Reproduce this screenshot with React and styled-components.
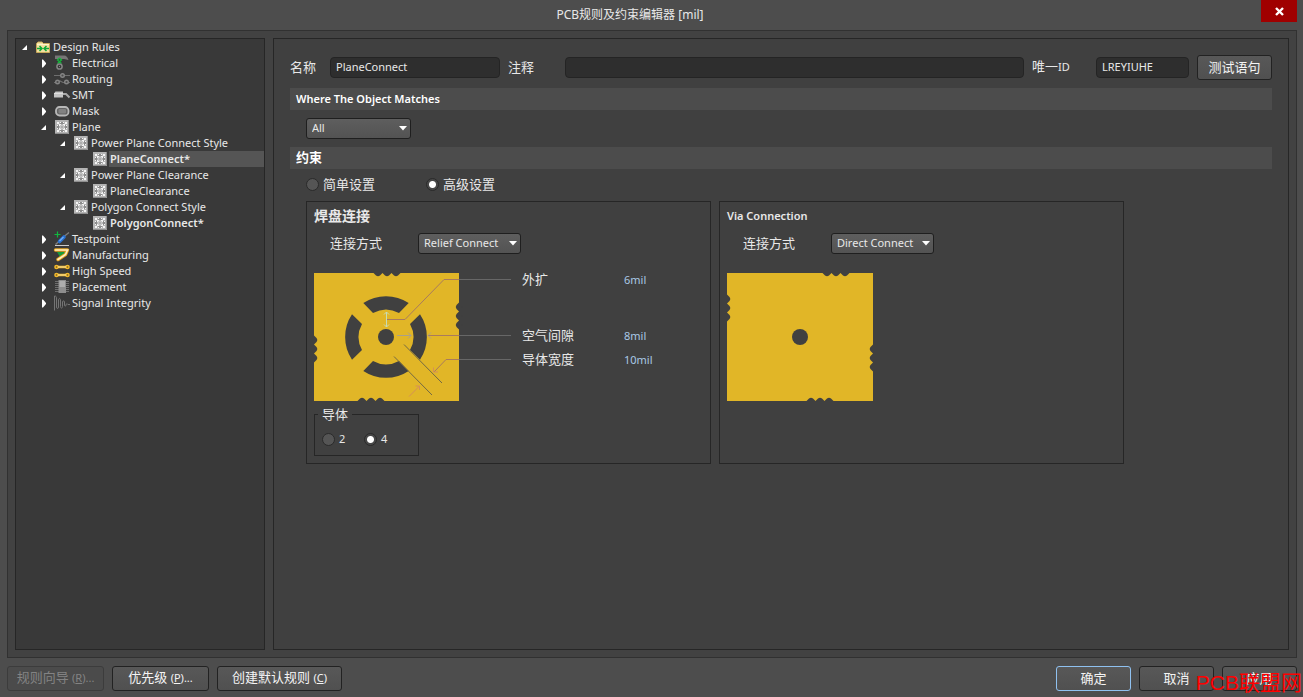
import React, { useState } from 'react';
import styled, { createGlobalStyle } from 'styled-components';

const colors = {
  window: '#4d4d4d',
  frame: '#424242',
  panel: '#404040',
  tree: '#393939',
  selected: '#555555',
  line: '#262626',
  text: '#e8e8e8',
  value: '#a9c8e6',
  gold: '#e1b627',
};

const GlobalStyle = createGlobalStyle`
  * {
    box-sizing: border-box;
  }

  body {
    margin: 0;
    background: ${colors.window};
    color: ${colors.text};
    font-family: 'Noto Sans', 'Noto Sans CJK SC', sans-serif;
    font-size: 11px;
    line-height: 16px;
  }

  button, input, select {
    font: inherit;
    color: inherit;
  }
`;

// -------------------- WINDOW --------------------

const Window = styled.div`
  display: flex;
  flex-direction: column;
  min-height: 100vh;
  padding: 0 6px 6px 7px;
  position: relative;
`;

const TitleBar = styled.header`
  display: flex;
  align-items: flex-start;
  height: 30px;
`;

const WindowTitle = styled.h1`
  flex: 1;
  margin: 0;
  padding: 7px 8px 0 0;
  font-size: 12px;
  font-weight: 400;
  text-align: center;
`;

const CloseButton = styled.button`
  display: flex;
  align-items: center;
  justify-content: center;
  width: 36px;
  height: 22px;
  padding: 0;
  border: none;
  background: #a00000;
`;

const Frame = styled.main`
  flex: 1;
  display: flex;
  gap: 8px;
  padding: 7px;
  border: 1px solid #313131;
  background: ${colors.frame};
`;

const Footer = styled.footer`
  display: flex;
  gap: 8px;
  padding-top: 8px;
`;

const Spacer = styled.div`
  flex: 1;
`;

const Button = styled.button`
  min-width: ${(p) => (p.$wide ? 97 : 75)}px;
  height: 25px;
  padding: 0 ${(p) => (p.$fit ? 14 : 4)}px 2px;
  border: 1px solid ${(p) => (p.$primary ? '#8fc1f0' : '#222')};
  border-radius: 3px;
  background: linear-gradient(#585858, #505050);
  color: #f4f4f4;
  font-size: 13px;
  line-height: 18px;
  white-space: nowrap;

  &:disabled {
    border-color: #3c3c3c;
    background: #4b4b4b;
    color: #838383;
  }
`;

const Small = styled.span`
  font-size: 11px;
`;

const Watermark = styled.div`
  position: absolute;
  right: 1px;
  bottom: 2px;
  color: #ff0000;
  font-family: 'Liberation Sans', 'Noto Sans CJK SC', sans-serif;
  font-size: 21px;
  line-height: 24px;
  pointer-events: none;
`;

// -------------------- TREE --------------------

const Tree = styled.ul`
  flex: 0 0 250px;
  margin: 0;
  padding: 0;
  border: 1px solid ${colors.line};
  background: ${colors.tree};
  list-style: none;
`;

const TreeRow = styled.li`
  display: flex;
  height: 16px;
  padding-left: ${(p) => 4 + p.$level * 19}px;
`;

const CaretBox = styled.span`
  flex: 0 0 14px;
  height: 16px;
`;

const IconBox = styled.span`
  flex: 0 0 18px;
  height: 16px;
`;

const TreeLabel = styled.span`
  flex: 1;
  padding-left: 1px;
  font-weight: ${(p) => (p.$bold ? 600 : 400)};
  background: ${(p) => (p.$selected ? colors.selected : 'transparent')};
`;

// -------------------- RULE FORM --------------------

const Panel = styled.section`
  flex: 1;
  min-width: 0;
  padding: 16px;
  border: 1px solid ${colors.line};
  background: ${colors.panel};
`;

const RuleHeader = styled.div`
  display: grid;
  grid-template-columns: 32px 170px 49px 1fr 56px 93px 75px;
  column-gap: 8px;
  align-items: center;
  margin-bottom: 8px;
`;

const FieldLabel = styled.label`
  padding-bottom: 2px;
  font-size: 13px;
`;

const TextInput = styled.input`
  width: 100%;
  height: 21px;
  padding: 0 5px 2px;
  border: 1px solid #242424;
  border-radius: 4px;
  background: #2e2e2e;
  outline: none;
`;

const SectionBar = styled.h2`
  height: 22px;
  margin: 0;
  padding: 0 6px;
  background: #4c4c4c;
  color: #fff;
  font-size: ${(p) => (p.$large ? 13 : 11)}px;
  font-weight: ${(p) => (p.$large ? 700 : 600)};
  line-height: ${(p) => (p.$large ? 20 : 22)}px;
`;

const ScopeRow = styled.div`
  padding: 8px 16px;
`;

const SelectWrap = styled.span`
  display: inline-grid;
  width: ${(p) => p.$width}px;
  align-items: center;
  vertical-align: top;

  > * {
    grid-area: 1 / 1;
  }

  svg {
    justify-self: end;
    margin-right: 4px;
    pointer-events: none;
  }
`;

const NativeSelect = styled.select`
  appearance: none;
  width: 100%;
  height: 21px;
  padding: 0 5px 2px;
  border: 1px solid #1f1f1f;
  border-radius: 3px;
  background: linear-gradient(#5e5e5e, #535353);
`;

const ModeRow = styled.div`
  display: grid;
  grid-template-columns: 120px 120px;
  padding: 7px 16px 9px;
`;

const RadioLabel = styled.label`
  display: flex;
  align-items: center;
  gap: 4px;
  height: 16px;
  font-size: ${(p) => (p.$large ? 13 : 11)}px;
`;

const Radio = styled.input`
  appearance: none;
  width: 13px;
  height: 13px;
  margin: 0;
  border: 1px solid #2a2a2a;
  border-radius: 50%;
  background: #555;

  &:checked {
    background: radial-gradient(circle, #fff 0 3px, #474747 4px);
  }
`;

const Groups = styled.div`
  display: grid;
  grid-template-columns: repeat(2, minmax(0, 405px));
  gap: 8px;
  padding: 0 16px;
`;

const Group = styled.section`
  min-height: 263px;
  padding: 6px 7px 7px;
  border: 1px solid ${colors.line};
`;

const GroupTitle = styled.h3`
  margin: 0 0 9px;
  font-size: ${(p) => (p.$large ? 14 : 11)}px;
  font-weight: ${(p) => (p.$large ? 700 : 600)};
  line-height: 16px;
`;

const ConnectRow = styled.div`
  display: grid;
  grid-template-columns: 88px auto;
  justify-content: start;
  align-items: center;
  padding-left: 16px;
  margin-bottom: 17px;
`;

const Figure = styled.div`
  display: flex;
  gap: 11px;
  padding-top: 2px;

  > svg {
    flex: none;
  }
`;

const Sizes = styled.div`
  display: grid;
  grid-template-columns: 102px 60px;
  grid-template-rows: 56px 24px 24px;
  align-items: start;
  margin-top: -2px;
`;

const SizeInput = styled.input`
  width: 100%;
  height: 18px;
  padding: 0 0 1px;
  border: none;
  background: transparent;
  color: ${colors.value};
`;

const Conductors = styled.fieldset`
  display: grid;
  grid-template-columns: 42px 42px;
  width: 105px;
  height: 50px;
  margin: 5px 0 0;
  padding: 9px 3px 0;
  border: 1px solid ${colors.line};

  legend {
    padding: 0 4px;
    font-size: 13px;
  }

  label {
    padding-left: 4px;
  }
`;

// -------------------- ICONS --------------------

const FolderIcon = () => (
  <svg width="18" height="16" viewBox="0 0 18 16">
    <path d="M2.500 13.500v-9L4 3h4l1.500 1.500h6v9z" fill="#f3dfa0" stroke="#c9a95a" />
    <path d="M3 5.500h12" stroke="#fff3cc" />
    <path d="M3 9.500h5M5.500 7 8 9.500 5.500 12M15 9.500h-5M12.500 7 10 9.500l2.500 2.500" stroke="#0fa838" strokeWidth="1.500" fill="none" />
  </svg>
);

const ElectricalIcon = () => (
  <svg width="18" height="16" viewBox="0 0 18 16">
    <path d="M2 .5h9c2.500 0 3.500 1.500 4.500 4.500-2 0-2.500-1-4.500-1H2z" fill="#777" />
    <path d="m6.500 3 2 2-4 3.500M6.500 3l-2 2 4 3.500" stroke="#16b53c" strokeWidth="1.300" fill="none" />
    <circle cx="6.500" cy="11.500" r="2.600" fill="none" stroke="#858585" strokeWidth="1.500" />
    <path d="M6 11.500h1" stroke="#858585" />
  </svg>
);

const RoutingIcon = () => (
  <svg width="18" height="16" viewBox="0 0 18 16">
    <path d="M1 4.500h16M1 11.500h3l3-1.500 3 1.500h7" stroke="#6e6e6e" fill="none" strokeWidth="1.200" />
    <g fill="#4a4a4a" stroke="#858585" strokeWidth="1.400">
      <circle cx="9.500" cy="4.500" r="1.800" />
      <circle cx="4.500" cy="11" r="1.800" />
      <circle cx="13.500" cy="11" r="1.800" />
    </g>
  </svg>
);

const SmtIcon = () => (
  <svg width="18" height="16" viewBox="0 0 18 16">
    <path d="M1 6.500 2.500 4.500H10v6H1z" fill="#c4c4c4" />
    <path d="M1 6.500h9" stroke="#dedede" />
    <path d="M10 7h3l3.500 3.500" stroke="#a8a8a8" strokeWidth="2" fill="none" />
  </svg>
);

const MaskIcon = () => (
  <svg width="18" height="16" viewBox="0 0 18 16">
    <rect x="3" y="4" width="12.500" height="8.500" rx="3.500" fill="#636363" stroke="#b8b8b8" strokeWidth="1.800" />
    <rect x="5.500" y="6" width="7.500" height="4.500" rx="1" fill="#818181" />
  </svg>
);

// Copper square with a thermal relief: four arms meeting a ring of dots
const PlaneIcon = () => (
  <svg width="18" height="16" viewBox="0 0 18 16">
    <rect x="2" y="1" width="14" height="14" fill="#b4b4b4" />
    <path d="M2 14.500h13.500V1" fill="none" stroke="#8f8f8f" />
    <g fill="#8c8c8c">
      <path d="M7 3h4v2H7zM7 11h4v2H7zM4 6h2v4H4zM12 6h2v4h-2z" />
    </g>
    <g fill="#f4f4f4">
      <path d="M4 3h2v2H4zM12 3h2v2h-2zM4 11h2v2H4zM12 11h2v2h-2z" />
      <path d="M6 5h2v1H6zM10 5h2v1h-2zM6 10h2v1H6zM10 10h2v1h-2z" />
      <path d="M7 3h1v1H7zM10 3h1v1h-1zM7 12h1v1H7zM10 12h1v1h-1z" />
      <path d="M4 6h1v1H4zM4 9h1v1H4zM13 6h1v1h-1zM13 9h1v1h-1z" />
      <path d="M6 6h1v1H6zM6 9h1v1H6zM11 6h1v1h-1zM11 9h1v1h-1z" />
    </g>
    <rect x="7" y="6" width="4" height="4" fill="#c6c6c6" />
    <rect x="8" y="7" width="2" height="2" fill="#adadad" />
  </svg>
);

const TestpointIcon = () => (
  <svg width="18" height="16" viewBox="0 0 18 16">
    <path d="M2 14.500h14" stroke="#c9c9c9" />
    <path d="m2.500 13.500 4-3.500M11 5.500l5-4" stroke="#7d7d7d" strokeWidth="1.400" />
    <path d="m6.500 10.500 4.500-4.500" stroke="#2870d0" strokeWidth="3.600" strokeLinecap="round" />
    <path d="m6.500 10 4-4" stroke="#6fb0fb" strokeWidth="1.300" />
    <path d="M4.500.5v6M1.500 3.500h6" stroke="#10b840" strokeWidth="1.200" />
  </svg>
);

const ManufacturingIcon = () => (
  <svg width="18" height="16" viewBox="0 0 18 16">
    <path d="M4 5h9l-5 6.500z" fill="#189c3a" />
    <path d="M2.500 3h12L12.500 7.500 5 12.500" fill="none" stroke="#e5a51f" strokeWidth="3.400" strokeLinecap="round" strokeLinejoin="round" />
    <path d="M2.500 3h12L12.500 7.500 5 12.500" fill="none" stroke="#fff0c4" strokeWidth="1.600" strokeLinecap="round" />
  </svg>
);

const HighSpeedIcon = () => (
  <svg width="18" height="16" viewBox="0 0 18 16">
    {[4, 12].map((y) => (
      <g key={y}>
        <path d={`M3.500 ${y}h11`} stroke="#e2a71e" strokeWidth="2.600" />
        <circle cx="3.500" cy={y} r="2.300" fill="#f2b92c" />
        <circle cx="14.500" cy={y} r="2.300" fill="#f2b92c" />
        <path d={`M5 ${y}h8`} stroke="#ffeeb0" />
        <circle cx="3.500" cy={y} r=".8" fill="#6b5320" />
        <circle cx="14.500" cy={y} r=".8" fill="#6b5320" />
      </g>
    ))}
  </svg>
);

const PlacementIcon = () => (
  <svg width="18" height="16" viewBox="0 0 18 16">
    <path d="M2 2.500h14M2 4.500h14M2 6.500h14M2 8.500h14M2 10.500h14M2 12.500h14" stroke="#6d6d6d" />
    <rect x="5.500" y="1" width="7.500" height="13" fill="#8e8e8e" />
    <rect x="6.500" y="2" width="5.500" height="6" fill="#adadad" />
  </svg>
);

const SignalIcon = () => (
  <svg width="18" height="16" viewBox="0 0 18 16">
    <path
      d="M1.500 15.500V1c2 0 2 1 2 3v8c0 2 2 2 2 0V5c0-2 2-2 2 0v6.500c0 2 2 2 2 0V7c0-1.500 2-1.500 2 0v3c0 1.500 1.500 1.500 1.500 0 0-1.500 1.500-1.500 2-.5h2"
      fill="none"
      stroke="#757575"
    />
  </svg>
);

const Caret = ({ open }) => (
  <svg width="14" height="16" viewBox="0 0 14 16">
    <path d={open ? 'M7 6v5H2z' : 'M3 4.500v8h1l3-3.500v-1l-3-3.500z'} fill="#fff" />
  </svg>
);

const DropArrow = () => (
  <svg width="8" height="5" viewBox="0 0 8 5">
    <path d="M0 0h8L4 4.500z" fill="#fff" />
  </svg>
);

// -------------------- DIAGRAMS --------------------

// Small bites along the edges of the copper square
const Notches = ({ points, angle = 0 }) =>
  points.map(([x, y]) => (
    <path
      key={`${x}-${y}`}
      transform={`translate(${x} ${y}) rotate(${angle})`}
      d="M-4.500 0-2 2.500Q0 4 2 2.500L4.500 0 2-2.500Q0-4-2-2.500Z"
      fill={colors.panel}
    />
  ));

const ReliefDiagram = () => (
  <svg width="197" height="128" viewBox="0 0 197 128">
    <rect width="145" height="128" fill={colors.gold} />
    <Notches points={[[64, 0], [73, 0], [82, 0], [48, 128], [57, 128], [66, 128]]} />
    <Notches angle={90} points={[[145, 34], [145, 43], [145, 52], [0, 67], [0, 76], [0, 85]]} />
    <g fill={colors.panel}>
      <circle cx="72" cy="64" r="8" />
      {[0, 90, 180, 270].map((angle) => (
        <path
          key={angle}
          transform={`translate(72 64) rotate(${angle})`}
          d="M-22.700-34A41 41 0 0 1 22.700-34L13-24A27 27 0 0 0-13-24Z"
        />
      ))}
    </g>
    <g fill="none" stroke="#676767">
      <path d="M145 6.500h52M145 62.500h52M145 86.500h52" />
    </g>
    <g fill="none" stroke="#a97b5d">
      <path d="M145 6.500h-15l-39 40H73M145 62.500h-31M145 86.500h-13L120 99" />
    </g>
    <g fill="none" stroke="#c8dcb4">
      <path d="M72.500 39v15M70 41.500l2.500-2.500 2.500 2.500M70 51.500l2.500 2.500 2.500-2.500" />
    </g>
    <g fill="none" stroke="#aaa08a">
      <path d="M83 62.500h14M94 59.500l3 3-3 3M117 59.500l-3 3 3 3" />
    </g>
    <g fill="none" stroke="#d58f58">
      <path d="M119.500 94.500V99h4.500M95 123.500 105.500 113M101.500 113h4v4" />
    </g>
    <g fill="none" stroke="#746943">
      <path d="m90 71.500 38 38.500M80 83.500l38 38.500" />
    </g>
  </svg>
);

const DirectDiagram = () => (
  <svg width="146" height="128" viewBox="0 0 146 128">
    <rect width="146" height="128" fill={colors.gold} />
    <Notches points={[[100, 0], [109, 0], [118, 0], [84, 128], [93, 128], [102, 128]]} />
    <Notches angle={90} points={[[0, 26], [0, 35], [0, 44], [146, 76], [146, 85], [146, 94]]} />
    <circle cx="73" cy="64" r="8" fill={colors.panel} />
  </svg>
);

// -------------------- COMPONENTS --------------------

const treeItems = [
  { label: 'Design Rules', level: 0, open: true, icon: FolderIcon },
  { label: 'Electrical', level: 1, open: false, icon: ElectricalIcon },
  { label: 'Routing', level: 1, open: false, icon: RoutingIcon },
  { label: 'SMT', level: 1, open: false, icon: SmtIcon },
  { label: 'Mask', level: 1, open: false, icon: MaskIcon },
  { label: 'Plane', level: 1, open: true, icon: PlaneIcon },
  { label: 'Power Plane Connect Style', level: 2, open: true, icon: PlaneIcon },
  { label: 'PlaneConnect*', level: 3, bold: true, selected: true, icon: PlaneIcon },
  { label: 'Power Plane Clearance', level: 2, open: true, icon: PlaneIcon },
  { label: 'PlaneClearance', level: 3, icon: PlaneIcon },
  { label: 'Polygon Connect Style', level: 2, open: true, icon: PlaneIcon },
  { label: 'PolygonConnect*', level: 3, bold: true, icon: PlaneIcon },
  { label: 'Testpoint', level: 1, open: false, icon: TestpointIcon },
  { label: 'Manufacturing', level: 1, open: false, icon: ManufacturingIcon },
  { label: 'High Speed', level: 1, open: false, icon: HighSpeedIcon },
  { label: 'Placement', level: 1, open: false, icon: PlacementIcon },
  { label: 'Signal Integrity', level: 1, open: false, icon: SignalIcon },
];

const sizes = [
  { id: 'expansion', label: '外扩', value: '6mil' },
  { id: 'air-gap', label: '空气间隙', value: '8mil' },
  { id: 'conductor-width', label: '导体宽度', value: '10mil' },
];

function Select({ width, options, ...rest }) {
  return (
    <SelectWrap $width={width}>
      <NativeSelect {...rest}>
        {options.map((o) => (
          <option key={o}>{o}</option>
        ))}
      </NativeSelect>
      <DropArrow />
    </SelectWrap>
  );
}

function RuleTree() {
  return (
    <Tree role="tree">
      {treeItems.map(({ label, level, open, bold, selected, icon: Icon }) => (
        <TreeRow key={label} $level={level} role="treeitem" aria-level={level + 1} aria-expanded={open}>
          <CaretBox>{open !== undefined && <Caret open={open} />}</CaretBox>
          <IconBox>
            <Icon />
          </IconBox>
          <TreeLabel $bold={bold} $selected={selected}>{label}</TreeLabel>
        </TreeRow>
      ))}
    </Tree>
  );
}

function App() {
  const [mode, setMode] = useState('advanced');
  const [conductors, setConductors] = useState('4');

  return (
    <>
      <GlobalStyle />
      <Window>
        <TitleBar>
          <WindowTitle>PCB规则及约束编辑器 [mil]</WindowTitle>
          <CloseButton type="button" aria-label="Close">
            <svg width="9" height="9" viewBox="0 0 9 9">
              <path d="m1 1 7 7M8 1 1 8" stroke="#fff" strokeWidth="2.400" />
            </svg>
          </CloseButton>
        </TitleBar>

        <Frame>
          <RuleTree />

          <Panel>
            <RuleHeader>
              <FieldLabel htmlFor="rule-name">名称</FieldLabel>
              <TextInput id="rule-name" defaultValue="PlaneConnect" />
              <FieldLabel htmlFor="rule-comment">注释</FieldLabel>
              <TextInput id="rule-comment" />
              <FieldLabel htmlFor="rule-id">唯一<Small>ID</Small></FieldLabel>
              <TextInput id="rule-id" defaultValue="LREYIUHE" />
              <Button type="button">测试语句</Button>
            </RuleHeader>

            <SectionBar>Where The Object Matches</SectionBar>
            <ScopeRow>
              <Select width={105} options={['All']} aria-label="Where The Object Matches" />
            </ScopeRow>

            <SectionBar $large>约束</SectionBar>
            <ModeRow>
              <RadioLabel $large>
                <Radio type="radio" name="mode" checked={mode === 'simple'} onChange={() => setMode('simple')} />
                简单设置
              </RadioLabel>
              <RadioLabel $large>
                <Radio type="radio" name="mode" checked={mode === 'advanced'} onChange={() => setMode('advanced')} />
                高级设置
              </RadioLabel>
            </ModeRow>

            <Groups>
              <Group>
                <GroupTitle $large>焊盘连接</GroupTitle>
                <ConnectRow>
                  <FieldLabel htmlFor="pad-style">连接方式</FieldLabel>
                  <Select id="pad-style" width={103} options={['Relief Connect']} />
                </ConnectRow>
                <Figure>
                  <ReliefDiagram />
                  <Sizes>
                    {sizes.map((s) => (
                      <React.Fragment key={s.id}>
                        <FieldLabel htmlFor={s.id}>{s.label}</FieldLabel>
                        <SizeInput id={s.id} defaultValue={s.value} />
                      </React.Fragment>
                    ))}
                  </Sizes>
                </Figure>
                <Conductors>
                  <legend>导体</legend>
                  {['2', '4'].map((n) => (
                    <RadioLabel key={n}>
                      <Radio
                        type="radio"
                        name="conductors"
                        checked={conductors === n}
                        onChange={() => setConductors(n)}
                      />
                      {n}
                    </RadioLabel>
                  ))}
                </Conductors>
              </Group>

              <Group>
                <GroupTitle>Via Connection</GroupTitle>
                <ConnectRow>
                  <FieldLabel htmlFor="via-style">连接方式</FieldLabel>
                  <Select id="via-style" width={103} options={['Direct Connect']} />
                </ConnectRow>
                <Figure>
                  <DirectDiagram />
                </Figure>
              </Group>
            </Groups>
          </Panel>
        </Frame>

        <Footer>
          <Button type="button" $wide disabled>规则向导 <Small>(<u>R</u>)...</Small></Button>
          <Button type="button" $wide>优先级 <Small>(<u>P</u>)...</Small></Button>
          <Button type="button" $fit>创建默认规则 <Small>(<u>C</u>)</Small></Button>
          <Spacer />
          <Button type="button" $primary>确定</Button>
          <Button type="button">取消</Button>
          <Button type="button">应用</Button>
        </Footer>

        <Watermark>PCB联盟网</Watermark>
      </Window>
    </>
  );
}

export default App;
